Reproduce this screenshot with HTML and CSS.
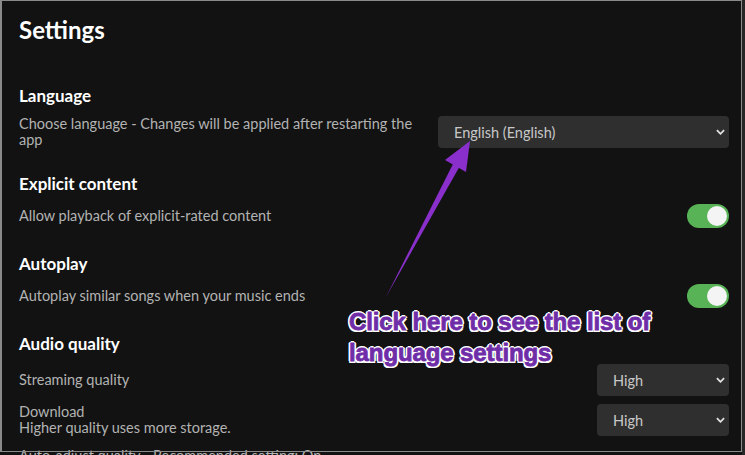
FILE: index.html
```html
<!DOCTYPE html>
<html lang="en">
<head>
    <meta charset="UTF-8">
    <meta name="viewport" content="width=device-width, initial-scale=1.0">
    <title>Settings</title>
    <link rel="stylesheet" href="styles.css">
</head>
<body>
    <div class="window">
        <h1 class="page-title">Settings</h1>

        <section class="group">
            <h2>Language</h2>
            <div class="row">
                <p class="desc">Choose language - Changes will be applied after restarting the app</p>
                <div class="select select-wide">
                    <span>English (English)</span>
                    <svg class="chevron" viewBox="0 0 10 6"><path d="M1 1l4 4 4-4" /></svg>
                </div>
            </div>
        </section>

        <section class="group">
            <h2>Explicit content</h2>
            <div class="row">
                <p class="desc">Allow playback of explicit-rated content</p>
                <div class="toggle"><span class="knob"></span></div>
            </div>
        </section>

        <section class="group">
            <h2>Autoplay</h2>
            <div class="row">
                <p class="desc">Autoplay similar songs when your music ends</p>
                <div class="toggle"><span class="knob"></span></div>
            </div>
        </section>

        <section class="group">
            <h2>Audio quality</h2>
            <div class="row">
                <p class="desc">Streaming quality</p>
                <div class="select select-small">
                    <span>High</span>
                    <svg class="chevron" viewBox="0 0 10 6"><path d="M1 1l4 4 4-4" /></svg>
                </div>
            </div>
            <div class="row">
                <p class="desc">Download<br>Higher quality uses more storage.</p>
                <div class="select select-small">
                    <span>High</span>
                    <svg class="chevron" viewBox="0 0 10 6"><path d="M1 1l4 4 4-4" /></svg>
                </div>
            </div>
            <div class="row row-last">
                <p class="desc">Auto-adjust quality - Recommended setting: On</p>
            </div>
        </section>

        <!-- callout pointing at the language dropdown -->
        <svg class="arrow" viewBox="0 0 745 455">
            <path d="M386 297 L461 164 L455 160 Z" />
            <path d="M470 141 L445 160 L466 172 Z" />
        </svg>
        <p class="callout">Click here to see the list of<br>language settings</p>

        <div class="frame"></div>
    </div>
</body>
</html>
```

FILE: styles.css
```css
* {
    box-sizing: border-box;
}

body {
    margin: 0;
    background-color: #262626;
    font-family: Lato, "Noto Sans", sans-serif;
}

.window {
    position: relative;
    width: 742px;
    height: 455px;
    overflow: hidden;
    background-color: #121212;
    padding: 14px 13px 0 19px;
    color: #fff;
}

.page-title {
    margin: 0 0 38px;
    font-size: 24px;
    line-height: 32px;
    font-weight: 700;
}

.group {
    margin-bottom: 24px;
}

.group h2 {
    margin: 0 0 8px;
    font-size: 17px;
    line-height: 24px;
    font-weight: 700;
}

.row {
    display: flex;
    align-items: center;
    justify-content: space-between;
    gap: 24px;
    margin-bottom: 8px;
}

.row-last {
    min-height: 24px;
}

.desc {
    margin: 0;
    max-width: 410px;
    font-size: 14.5px;
    line-height: 16px;
    color: #b3b3b3;
}

.select {
    display: flex;
    align-items: center;
    justify-content: space-between;
    height: 32px;
    padding: 0 4px 0 16px;
    border-radius: 4px;
    background-color: #2f2f2f;
    color: #c8c8c8;
    font-size: 14.5px;
    flex-shrink: 0;
}

.select-wide {
    width: 291px;
}

.select-small {
    width: 132px;
}

.chevron {
    width: 9px;
    height: 6px;
    fill: none;
    stroke: #e0e0e0;
    stroke-width: 2;
}

.toggle {
    position: relative;
    width: 42px;
    height: 24px;
    border-radius: 12px;
    background-color: #58b356;
    flex-shrink: 0;
}

.knob {
    position: absolute;
    top: 2px;
    right: 2px;
    width: 20px;
    height: 20px;
    border-radius: 50%;
    background-color: #f4f4f4;
}

.arrow {
    position: absolute;
    top: 0;
    left: 0;
    width: 745px;
    height: 455px;
    fill: #8a2fcc;
}

.callout {
    position: absolute;
    top: 306px;
    left: 349px;
    margin: 0;
    font-family: "Liberation Sans", Arial, sans-serif;
    font-size: 24px;
    line-height: 31px;
    font-weight: 700;
    letter-spacing: -0.1px;
    color: #6f2da8;
    -webkit-text-stroke: 0.8px #6f2da8;
    text-shadow:
        -2px 0 0 #fff, 2px 0 0 #fff, 0 -2px 0 #fff, 0 2px 0 #fff,
        -1.5px -1.5px 0 #fff, 1.5px -1.5px 0 #fff, -1.5px 1.5px 0 #fff, 1.5px 1.5px 0 #fff;
}

.frame {
    position: absolute;
    top: 0;
    left: 0;
    width: 742px;
    height: 452px;
    border: 1px solid #8a8a8a;
    border-left-width: 2px;
    pointer-events: none;
}
```
